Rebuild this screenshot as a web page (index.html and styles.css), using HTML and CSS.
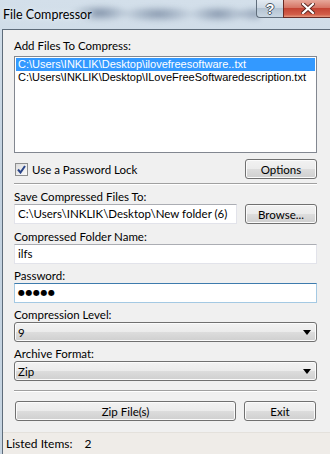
FILE: index.html
```html
<!DOCTYPE html>
<html lang="en">
<head>
    <meta charset="UTF-8">
    <meta name="viewport" content="width=device-width, initial-scale=1.0">
    <title>File Compressor</title>
    <link rel="stylesheet" href="styles.css">
</head>
<body>
    <div class="window">
        <div class="titlebar">
            <span class="behind"></span>
            <span class="title">File Compressor</span>
            <div class="captions">
                <span class="cap help">?</span>
                <span class="cap close">
                    <svg width="14" height="11" viewBox="0 0 14 11">
                        <path d="M2 1 L12 10 M12 1 L2 10" stroke="#5a2620" stroke-width="4" stroke-linecap="square"/>
                        <path d="M2 1 L12 10 M12 1 L2 10" stroke="#fff" stroke-width="2.2" stroke-linecap="square"/>
                    </svg>
                </span>
            </div>
        </div>

        <div class="frame">
            <div class="client">
                <div class="content">
                    <div class="lbl first">Add Files To Compress:</div>
                    <ul class="filelist">
                        <li class="selected">C:\Users\INKLIK\Desktop\ilovefreesoftware..txt</li>
                        <li>C:\Users\INKLIK\Desktop\ILoveFreeSoftwaredescription.txt</li>
                    </ul>

                    <div class="row optsRow">
                        <label class="check">
                            <span class="box">
                                <svg width="9" height="9" viewBox="0 0 9 9">
                                    <path d="M1 4.5 L3.5 7.5 L8 1" fill="none" stroke="#2a4589" stroke-width="2"/>
                                </svg>
                            </span>
                            Use a Password Lock
                        </label>
                        <button class="btn">Options</button>
                    </div>

                    <div class="sep"></div>

                    <div class="field saveField">
                        <div class="lbl">Save Compressed Files To:</div>
                        <div class="row">
                            <div class="textbox pathBox">C:\Users\INKLIK\Desktop\New folder (6)</div>
                            <button class="btn">Browse...</button>
                        </div>
                    </div>

                    <div class="field firstField">
                        <div class="lbl">Compressed Folder Name:</div>
                        <div class="textbox">ilfs</div>
                    </div>

                    <div class="field">
                        <div class="lbl">Password:</div>
                        <div class="textbox focused"><span class="dots">●●●●●</span></div>
                    </div>

                    <div class="field">
                        <div class="lbl">Compression Level:</div>
                        <div class="combo">
                            <span>9</span>
                            <svg width="8" height="5" viewBox="0 0 8 5"><path d="M0 0 H8 L4 5 Z" fill="#000"/></svg>
                        </div>
                    </div>

                    <div class="field">
                        <div class="lbl">Archive Format:</div>
                        <div class="combo">
                            <span>Zip</span>
                            <svg width="8" height="5" viewBox="0 0 8 5"><path d="M0 0 H8 L4 5 Z" fill="#000"/></svg>
                        </div>
                    </div>

                    <div class="sep bottomSep"></div>

                    <div class="row actions">
                        <button class="btn wide">Zip File(s)</button>
                        <button class="btn">Exit</button>
                    </div>
                </div>

                <div class="statusbar">Listed Items:<span class="count">2</span></div>
            </div>
        </div>
    </div>
</body>
</html>
```
FILE: styles.css
```css
body {
    margin: 0;
    font-family: Lato, "Liberation Sans", sans-serif;
    font-size: 11.5px;
    color: #000;
    background: #c8d6e4;
    overflow: hidden;
}

.window {
    width: 330px;
    height: 454px;
    background: linear-gradient(to bottom, #d3dfea, #c2d1df 40%, #c7d5e2);
}

/* title bar */
.titlebar {
    position: relative;
    height: 29px;
    overflow: hidden;
}

/* blurred window seen through the glass */
.behind {
    position: absolute;
    left: 70px;
    top: 2px;
    width: 190px;
    height: 22px;
    background:
        radial-gradient(ellipse 30px 9px at 30px 11px, rgba(80, 100, 130, 0.6), transparent),
        radial-gradient(ellipse 38px 9px at 88px 12px, rgba(80, 100, 130, 0.55), transparent),
        radial-gradient(ellipse 30px 9px at 148px 12px, rgba(80, 100, 130, 0.55), transparent),
        radial-gradient(ellipse 20px 8px at 184px 12px, rgba(80, 100, 130, 0.45), transparent);
    filter: blur(2px);
}

.title {
    position: relative;
    display: inline-block;
    margin: 7px 0 0 3px;
    font-size: 12.5px;
    text-shadow: 0 0 6px #e6eef6, 0 0 3px #e6eef6;
}

.captions {
    position: absolute;
    top: 0;
    left: 256px;
    display: flex;
}

.cap {
    height: 18px;
    display: flex;
    align-items: center;
    justify-content: center;
    border: 1px solid #5f6d7b;
    border-top: none;
    box-sizing: border-box;
}

.help {
    width: 27px;
    border-radius: 0 0 0 4px;
    border-right: none;
    background: linear-gradient(to bottom, #e4ebf2, #cdd8e3 45%, #b4c3d2 50%, #c9d6e2);
    color: #fff;
    font-family: "Liberation Sans", sans-serif;
    font-weight: bold;
    font-size: 14px;
    text-shadow: 1px 0 0 #4b5866, -1px 0 0 #4b5866, 0 1px 0 #4b5866, 0 -1px 0 #4b5866;
}

.close {
    width: 50px;
    border-color: #6b2b25;
    background: linear-gradient(to bottom, #e7a89b, #d67565 45%, #c44434 50%, #d25d48 85%, #e69a80);
}

/* frame */
.frame {
    height: 425px;
    padding-left: 2px;
}

.client {
    height: 424px;
    border-left: 1px solid #5e6c7a;
    border-top: 1px solid #5e6c7a;
    background: #f0f0f0;
    display: flex;
    flex-direction: column;
}

.content {
    flex: 1;
    width: 303px;
    padding-left: 11px;
}

.lbl {
    line-height: 15px;
    height: 15px;
    white-space: nowrap;
}

.lbl.first {
    margin-top: 8px;
    height: 18px;
}

.filelist {
    list-style: none;
    margin: 0;
    padding: 1px;
    height: 93px;
    background: #fff;
    border: 1px solid #828790;
    font-family: "Liberation Sans", sans-serif;
    font-size: 11px;
}

.filelist li {
    height: 13px;
    line-height: 13px;
    padding-left: 2px;
    white-space: nowrap;
}

.filelist li.selected {
    background: #3399ff;
    color: #fff;
}

.row {
    display: flex;
    gap: 8px;
    align-items: center;
}

.optsRow {
    margin-top: 6px;
    justify-content: space-between;
}

.check {
    display: flex;
    align-items: center;
    gap: 4px;
    padding-left: 1px;
}

.box {
    width: 11px;
    height: 11px;
    border: 1px solid #8e8f8f;
    background: linear-gradient(135deg, #dcdcdc, #fbfbfb);
    display: flex;
    align-items: center;
    justify-content: center;
}

.btn {
    width: 72px;
    height: 20px;
    padding: 0;
    font-family: inherit;
    font-size: 11.5px;
    color: #000;
    border: 1px solid #707070;
    border-radius: 3px;
    background: linear-gradient(to bottom, #f2f2f2, #ebebeb 50%, #dddddd 50%, #cfcfcf);
    box-shadow: inset 0 0 0 1px #fbfbfb;
}

.btn.wide {
    width: 221px;
    margin-left: 1px;
}

.sep {
    margin-top: 4px;
    height: 0;
    border-top: 1px solid #a0a0a0;
    border-bottom: 1px solid #fff;
}

.saveField {
    margin-top: 7px;
}

.field {
    margin-top: 4px;
}

.field.firstField {
    margin-top: 5px;
}

.textbox {
    height: 20px;
    box-sizing: border-box;
    background: #fff;
    border: 1px solid #e2e3ea;
    border-top-color: #abadb3;
    padding-left: 3px;
    line-height: 18px;
    white-space: nowrap;
    overflow: hidden;
}

.pathBox {
    width: 223px;
}

.textbox.focused {
    border-color: #a4c9e3;
    border-top-color: #3d7bad;
}

.dots {
    font-family: "DejaVu Sans", sans-serif;
    font-size: 8px;
    letter-spacing: 0.5px;
    vertical-align: top;
}

.combo {
    height: 20px;
    box-sizing: border-box;
    border: 1px solid #707070;
    border-radius: 3px;
    background: linear-gradient(to bottom, #f2f2f2, #ebebeb 50%, #dddddd 50%, #cfcfcf);
    box-shadow: inset 0 0 0 1px #fbfbfb;
    display: flex;
    align-items: center;
    justify-content: space-between;
    padding: 0 5px 0 3px;
}

.bottomSep {
    margin-top: 9px;
}

.actions {
    margin-top: 9px;
}

.statusbar {
    height: 22px;
    line-height: 22px;
    padding-left: 3px;
    font-size: 12px;
    background: #efece8;
    border-top: 1px solid #e4e1dc;
    box-sizing: border-box;
}

.count {
    margin-left: 12px;
}
```
